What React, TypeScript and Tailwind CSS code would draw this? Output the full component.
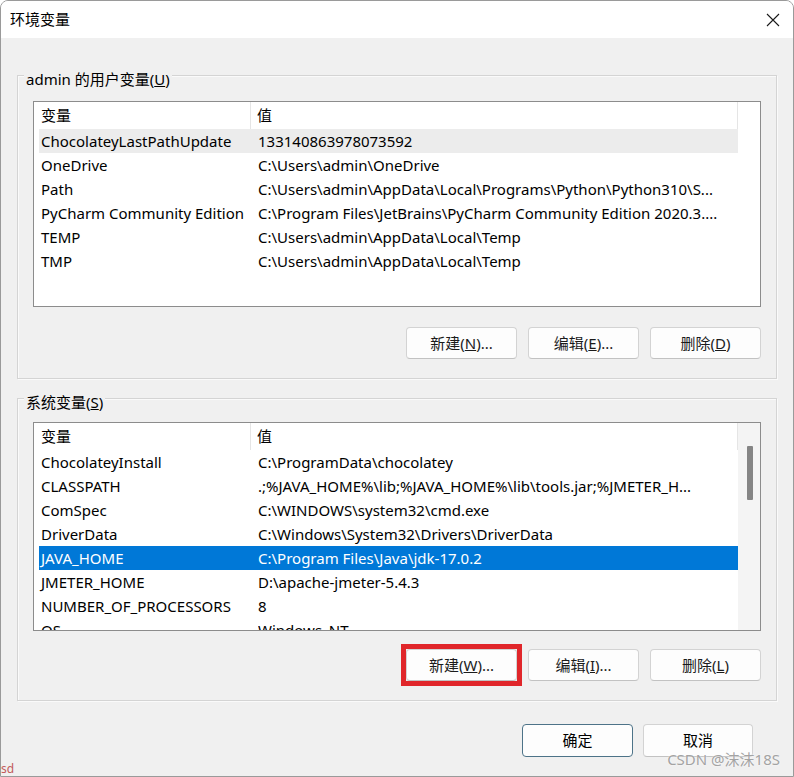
import React from "react";

type Row = { name: string; value: string };

const userVars: Row[] = [
  { name: "ChocolateyLastPathUpdate", value: "133140863978073592" },
  { name: "OneDrive", value: "C:\\Users\\admin\\OneDrive" },
  { name: "Path", value: "C:\\Users\\admin\\AppData\\Local\\Programs\\Python\\Python310\\S..." },
  { name: "PyCharm Community Edition", value: "C:\\Program Files\\JetBrains\\PyCharm Community Edition 2020.3...." },
  { name: "TEMP", value: "C:\\Users\\admin\\AppData\\Local\\Temp" },
  { name: "TMP", value: "C:\\Users\\admin\\AppData\\Local\\Temp" },
];

const sysVars: Row[] = [
  { name: "ChocolateyInstall", value: "C:\\ProgramData\\chocolatey" },
  { name: "CLASSPATH", value: ".;%JAVA_HOME%\\lib;%JAVA_HOME%\\lib\\tools.jar;%JMETER_H..." },
  { name: "ComSpec", value: "C:\\WINDOWS\\system32\\cmd.exe" },
  { name: "DriverData", value: "C:\\Windows\\System32\\Drivers\\DriverData" },
  { name: "JAVA_HOME", value: "C:\\Program Files\\Java\\jdk-17.0.2" },
  { name: "JMETER_HOME", value: "D:\\apache-jmeter-5.4.3" },
  { name: "NUMBER_OF_PROCESSORS", value: "8" },
  { name: "OS", value: "Windows_NT" },
];

function Btn({ children, className = "" }: { children: React.ReactNode; className?: string }) {
  return (
    <button
      className={
        "w-[111px] h-[32px] rounded-[4px] bg-[#fdfdfd] border border-[#d3d3d3] border-b-[#c2c2c2] text-[15px] text-[#1b1b1b] flex items-center justify-center " +
        className
      }
    >
      {children}
    </button>
  );
}

function VarList({
  rows,
  hover,
  selected,
  scroll,
  height,
}: {
  rows: Row[];
  hover?: number;
  selected?: number;
  scroll?: boolean;
  height: string;
}) {
  return (
    <div className={"relative bg-white border border-[#8c8c8c] overflow-hidden " + height}>
      <div className="flex h-full">
        <div className="w-[704px] pl-[5px] overflow-hidden">
          {/* header */}
          <div className="flex h-[27px] items-center">
            <div className="w-[212px] pl-[2px] h-full flex items-center border-r border-[#e5e5e5]">变量</div>
            <div className="flex-1 pl-[6px] h-full flex items-center border-r border-[#e5e5e5]">值</div>
          </div>
          {rows.map((r, i) => (
            <div
              key={r.name}
              className={
                "flex h-[24px] items-center whitespace-nowrap " +
                (i === selected ? "bg-[#0078d7] text-white " : "") +
                (i === hover ? "bg-[#ececec] " : "")
              }
            >
              <div className="w-[219px] pl-[2px] overflow-hidden">{r.name}</div>
              <div className="flex-1 overflow-hidden">{r.value}</div>
            </div>
          ))}
        </div>
        <div className={"flex-1 " + (scroll ? "bg-[#f4f4f4] pt-[23px] pl-[9px]" : "")}>
          {scroll && <div className="w-[6px] h-[54px] bg-[#858585] rounded-[1px]" />}
        </div>
      </div>
    </div>
  );
}

function Group({ label, children }: { label: React.ReactNode; children: React.ReactNode }) {
  return (
    <div className="border border-[#d4d4d4] shadow-[inset_1px_1px_0_#fafafa,1px_1px_0_#fafafa] px-[15px] pb-[19px]">
      <div className="-mt-[7px] -ml-[9px] w-fit px-[2px] bg-[#f0f0f0] leading-[20px] h-[20px]">{label}</div>
      {children}
    </div>
  );
}

export default function App() {
  return (
    <div
      className="relative w-[794px] h-[777px] bg-[#f0f0f0] border border-[#9a9a9a] rounded-t-[8px] overflow-hidden text-[15px] text-black"
      style={{ fontFamily: '"Noto Sans", "Noto Sans CJK SC", sans-serif' }}
    >
      {/* title bar */}
      <div className="h-[37px] bg-white flex items-center justify-between pl-[9px] pr-[13px]">
        <span>环境变量</span>
        <svg width="14" height="14" viewBox="0 0 14 14">
          <path d="M1 1 L13 13 M13 1 L1 13" stroke="#1a1a1a" strokeWidth="1.1" fill="none" />
        </svg>
      </div>

      <div className="pl-[16px] pr-[16px] pt-[37px]">
        <Group
          label={
            <>
              admin 的用户变量(<span className="underline">U</span>)
            </>
          }
        >
          <div className="mt-[12px]">
            <VarList rows={userVars} hover={0} height="h-[206px]" />
          </div>
          <div className="mt-[20px] flex justify-end gap-[11px]">
            <Btn>
              新建(<span className="underline">N</span>)...
            </Btn>
            <Btn>
              编辑(<span className="underline">E</span>)...
            </Btn>
            <Btn>
              删除(<span className="underline">D</span>)
            </Btn>
          </div>
        </Group>

        <div className="mt-[19px]">
          <Group
            label={
              <>
                系统变量(<span className="underline">S</span>)
              </>
            }
          >
            <div className="mt-[10px]">
              <VarList rows={sysVars} selected={4} scroll height="h-[209px]" />
            </div>
            <div className="mt-[18px] flex justify-end gap-[11px]">
              <div className="outline-[5px] outline-solid outline-[#e0262a]">
                <Btn>
                  新建(<span className="underline">W</span>)...
                </Btn>
              </div>
              <Btn>
                编辑(<span className="underline">I</span>)...
              </Btn>
              <Btn>
                删除(<span className="underline">L</span>)
              </Btn>
            </div>
          </Group>
        </div>

        <div className="mt-[23px] flex justify-end gap-[10px] pr-[24px]">
          <button className="w-[111px] h-[33px] rounded-[4px] bg-[#fdfdfd] border border-[#4d7388] text-[15px]">
            确定
          </button>
          <button className="w-[110px] h-[33px] rounded-[4px] bg-[#fdfdfd] border border-[#d3d3d3] border-b-[#c2c2c2] text-[15px]">
            取消
          </button>
        </div>
      </div>

      {/* overlays */}
      <div className="absolute right-[13px] bottom-[6px] text-[15px] text-[#a3a3a3] [text-shadow:0_0_2px_#fff]">
        CSDN @沫沫18S
      </div>
      <div className="absolute left-0 bottom-0 text-[12px] leading-[14px] text-[#c25a5a]">sd</div>
    </div>
  );
}
